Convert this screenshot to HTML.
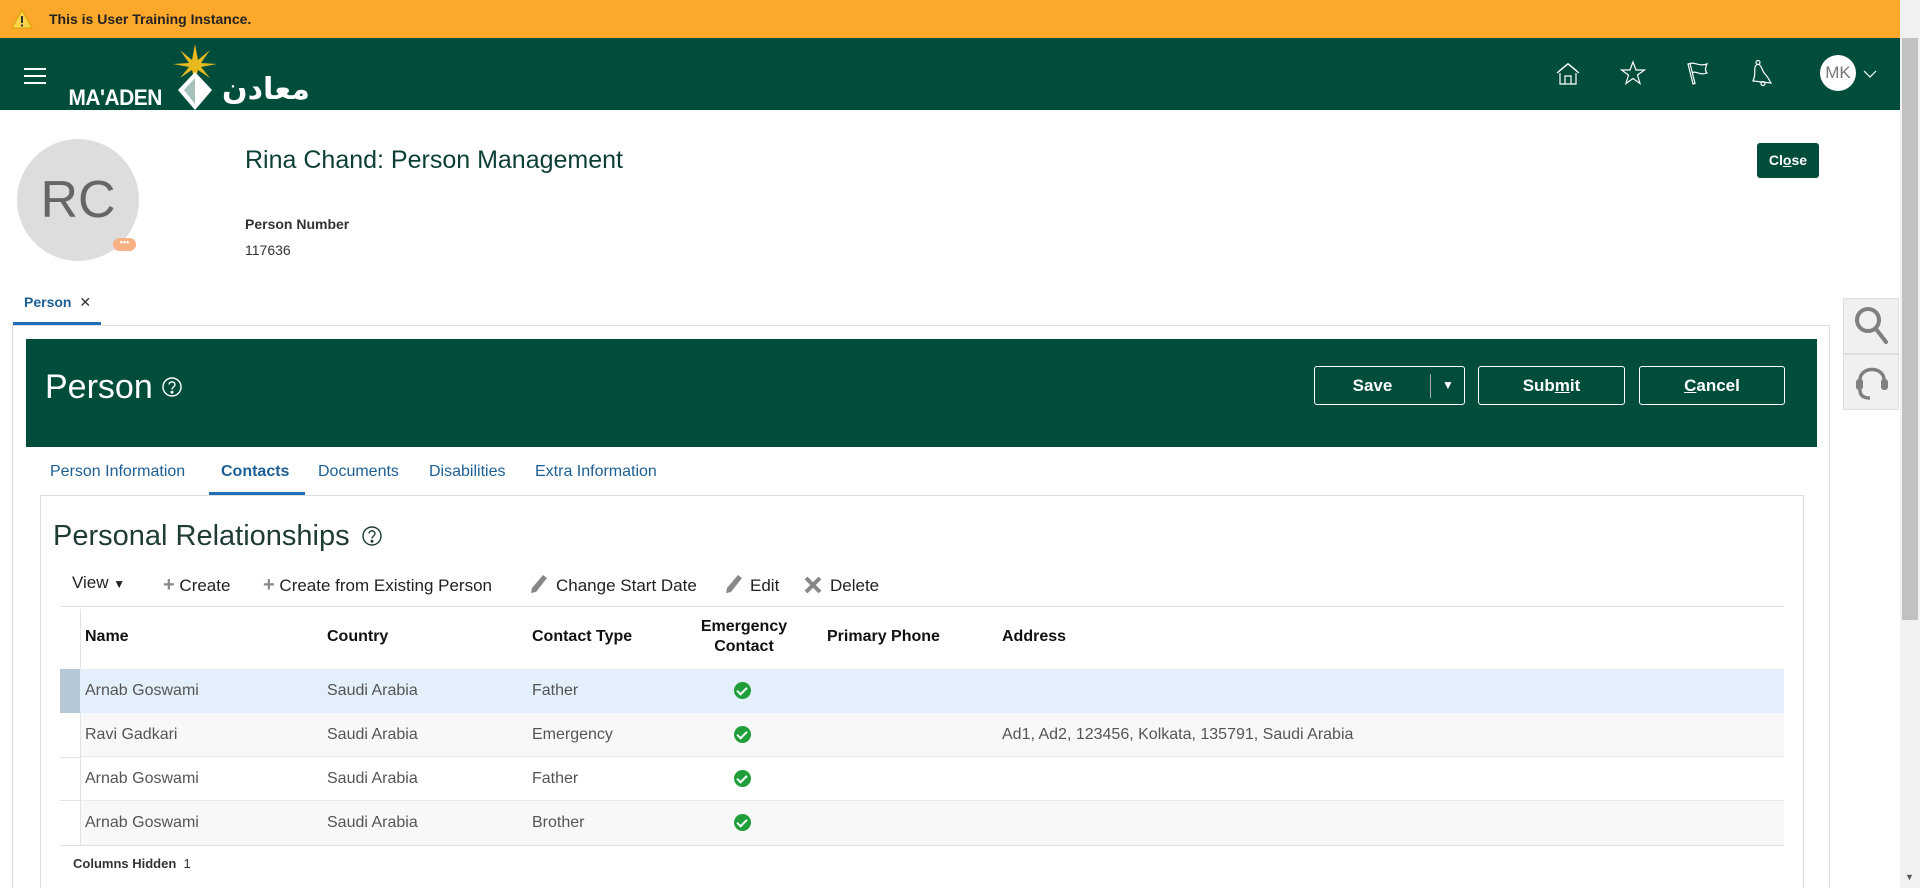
<!DOCTYPE html>
<html style="overflow:hidden;height:888px"><head><meta charset="utf-8"><style>
*{box-sizing:border-box;margin:0;padding:0}
body{width:1920px;height:888px;overflow:hidden;background:#fff;font-family:"Liberation Sans",sans-serif;position:relative;color:#333}
.a{position:absolute;white-space:nowrap}
.btn{position:absolute;border:1px solid #fff;border-radius:3px;color:#fff;font-weight:bold;font-size:17px;text-align:center;line-height:37px;height:39px}
.tb{font-size:17px;color:#222}
.th{font-size:16px;font-weight:bold;color:#111}
.td{font-size:16px;color:#555}
.chk{position:absolute;width:17px;height:17px;border-radius:50%;background:#1f9e3a}
.chk:after{content:"";position:absolute;left:5px;top:3px;width:4px;height:8px;border:solid #fff;border-width:0 2px 2px 0;transform:rotate(45deg)}
</style></head><body>
<div class="a" style="left:0;top:0;width:1900px;height:38px;background:#fca82b"></div>
<svg class="a" style="left:11px;top:9px" width="22" height="20" viewBox="0 0 22 20"><path d="M11 1 L21 19 L1 19 Z" fill="#f7d44a" stroke="#d9a400" stroke-width="1"/><rect x="10" y="7" width="2" height="7" fill="#333"/><rect x="10" y="15.5" width="2" height="2" fill="#333"/></svg>
<div class="a" style="left:49px;top:11px;font-size:14px;font-weight:bold;color:#222">This is User Training Instance.</div>
<div class="a" style="left:0;top:38px;width:1900px;height:72px;background:#004d3c"></div>
<div class="a" style="left:24px;top:68px;width:22px;height:2px;background:#fff"></div>
<div class="a" style="left:24px;top:75px;width:22px;height:2px;background:#fff"></div>
<div class="a" style="left:24px;top:82px;width:22px;height:2px;background:#fff"></div>
<div class="a" style="left:66px;top:85px;font-size:22px;font-weight:bold;color:#fff;letter-spacing:-0.5px;transform:scaleX(0.95)">MA'ADEN</div>
<svg class="a" style="left:170px;top:42px" width="50" height="70" viewBox="0 0 50 70"><polygon points="25,2 28,18 40,8 31,21 47,22 31,25 40,36 28,28 25,40 22,28 10,36 19,25 3,22 19,21 10,8 22,18" fill="#e8b91e"/><polygon points="25,30 42,48 25,68 8,48" fill="#fff"/><polygon points="25,36 25,62 14,48" fill="#004d3c" opacity=".35"/></svg>
<div class="a" style="left:222px;top:72px;font-size:30px;font-weight:bold;color:#fff;font-family:'DejaVu Sans',sans-serif">معادن</div>
<svg class="a" style="left:1555px;top:61px" width="26" height="26" viewBox="0 0 26 26" fill="none" stroke="#fff" stroke-width="1.2"><path d="M2 12 L13 3 L24 12"/><path d="M4 10 L13 2.5 L22 10" opacity=".7"/><path d="M5 12 V23 H21 V12"/><path d="M10 23 V15 H16 V23"/></svg>
<svg class="a" style="left:1620px;top:60px" width="26" height="26" viewBox="0 0 26 26" fill="none" stroke="#fff" stroke-width="1.2"><path d="M13 2 L16 10 L24.5 10 L17.5 15 L20 23.5 L13 18.5 L6 23.5 L8.5 15 L1.5 10 L10 10 Z"/></svg>
<svg class="a" style="left:1685px;top:60px" width="26" height="26" viewBox="0 0 26 26" fill="none" stroke="#fff" stroke-width="1.2"><path d="M3 4 L8 24 L10 23.5 L5 3.5 Z"/><path d="M4.5 4 C9 1 13 7 22 4 C20 8 20 11 22 13 C14 16 11 10 6.8 13"/></svg>
<svg class="a" style="left:1750px;top:59px" width="26" height="28" viewBox="0 0 26 28" fill="none" stroke="#fff" stroke-width="1.2"><circle cx="8" cy="3.5" r="2"/><path d="M7 5.5 C3 8 6 13 4 19 L3 22 L21 24 C19 21 18 18 15 15 C12 12 12 7 9 5.5"/><circle cx="13" cy="24.5" r="2"/></svg>
<div class="a" style="left:1820px;top:55px;width:36px;height:36px;border-radius:50%;background:#fff;color:#777;font-size:17px;line-height:36px;text-align:center">MK</div>
<svg class="a" style="left:1863px;top:70px" width="14" height="9" viewBox="0 0 14 9" fill="none" stroke="#fff" stroke-width="1.2"><path d="M1 1 L7 7 L13 1"/></svg>
<div class="a" style="left:1900px;top:0;width:20px;height:888px;background:#f1f1f1"></div>
<div class="a" style="left:1902px;top:38px;width:16px;height:582px;background:#c1c1c1"></div>
<div class="a" style="left:1905px;top:872px;font-size:9px;color:#555">▼</div>
<div class="a" style="left:17px;top:139px;width:122px;height:122px;border-radius:50%;background:#ddd;color:#666;font-size:52px;line-height:122px;text-align:center">RC</div>
<div class="a" style="left:113px;top:238px;width:23px;height:13px;border-radius:7px;background:#f7b184;color:#fff;font-size:9px;line-height:9px;text-align:center;font-weight:bold">•••</div>
<div class="a" style="left:245px;top:146px;font-size:25px;color:#0b3f35">Rina Chand: Person Management</div>
<div class="a" style="left:245px;top:216px;font-size:14px;font-weight:bold;color:#333">Person Number</div>
<div class="a" style="left:245px;top:242px;font-size:14px;color:#333">117636</div>
<div class="a" style="left:1757px;top:143px;width:62px;height:35px;background:#004d3c;border-radius:3px;color:#fff;font-weight:bold;font-size:14px;line-height:35px;text-align:center">Cl<u>o</u>se</div>
<div class="a" style="left:24px;top:294px;font-size:14px;font-weight:bold;color:#1d5f95">Person <span style="color:#333;font-weight:normal;margin-left:4px">✕</span></div>
<div class="a" style="left:12px;top:325px;width:1818px;height:563px;border:1px solid #ddd;border-bottom:none"></div>
<div class="a" style="left:13px;top:322px;width:88px;height:3px;background:#1e6fb8"></div>
<div class="a" style="left:26px;top:339px;width:1791px;height:108px;background:#004d3c"></div>
<div class="a" style="left:45px;top:368px;font-size:34px;color:#fff;font-weight:300">Person</div>
<svg class="a" style="left:161px;top:376px" width="22" height="22" viewBox="0 0 22 22" fill="none" stroke="#fff" stroke-width="1.4"><circle cx="11" cy="11" r="9"/><path d="M8 8.5 C8 5 14 5 14 8.5 C14 11 11 11 11 13.5"/><circle cx="11" cy="16.3" r=".8" fill="#fff"/></svg>
<div class="btn" style="left:1314px;top:366px;width:151px"><span style="position:absolute;left:0;width:115px;text-align:center">Save</span><span style="position:absolute;left:115px;top:7px;width:1px;height:24px;background:#aaa"></span><span style="position:absolute;left:116px;width:34px;text-align:center;font-size:12px">▼</span></div>
<div class="btn" style="left:1478px;top:366px;width:147px">Sub<u>m</u>it</div>
<div class="btn" style="left:1639px;top:366px;width:146px"><u>C</u>ancel</div>
<div class="a" style="left:50px;top:463px;font-size:16px;color:#1d5f95">Person Information</div>
<div class="a" style="left:221px;top:463px;font-size:16px;color:#1d5f95;font-weight:bold">Contacts</div>
<div class="a" style="left:318px;top:463px;font-size:16px;color:#1d5f95">Documents</div>
<div class="a" style="left:429px;top:463px;font-size:16px;color:#1d5f95">Disabilities</div>
<div class="a" style="left:535px;top:463px;font-size:16px;color:#1d5f95">Extra Information</div>
<div class="a" style="left:40px;top:495px;width:1764px;height:393px;border:1px solid #ddd;border-bottom:none"></div>
<div class="a" style="left:209px;top:492px;width:96px;height:3px;background:#1e6fb8"></div>
<div class="a" style="left:53px;top:520px;font-size:29px;color:#1e3b35;font-weight:300">Personal Relationships</div>
<svg class="a" style="left:361px;top:525px" width="22" height="22" viewBox="0 0 22 22" fill="none" stroke="#1e3b35" stroke-width="1.4"><circle cx="11" cy="11" r="9"/><path d="M8 8.5 C8 5 14 5 14 8.5 C14 11 11 11 11 13.5"/><circle cx="11" cy="16.3" r=".8" fill="#1e3b35"/></svg>
<div class="a tb" style="left:72px;top:573px">View <span style="font-size:12px">▼</span></div>
<div class="a tb" style="left:163px;top:576px"><span style="color:#888;font-weight:bold;font-size:20px;line-height:16px">+</span> Create</div>
<div class="a tb" style="left:263px;top:576px"><span style="color:#888;font-weight:bold;font-size:20px;line-height:16px">+</span> Create from Existing Person</div>
<svg class="a" style="left:530px;top:574px" width="18" height="20" viewBox="0 0 18 20"><path d="M13 1 L17 4 L6 18 L1 19 L2 14 Z" fill="#888"/></svg>
<div class="a tb" style="left:556px;top:576px">Change Start Date</div>
<svg class="a" style="left:725px;top:574px" width="18" height="20" viewBox="0 0 18 20"><path d="M13 1 L17 4 L6 18 L1 19 L2 14 Z" fill="#888"/></svg>
<div class="a tb" style="left:750px;top:576px">Edit</div>
<svg class="a" style="left:804px;top:576px" width="18" height="18" viewBox="0 0 18 18" stroke="#888" stroke-width="4"><path d="M2 2 L16 16 M16 2 L2 16"/></svg>
<div class="a tb" style="left:830px;top:576px">Delete</div>
<div class="a" style="left:60px;top:606px;width:1724px;height:1px;background:#dde3e8"></div>
<div class="a" style="left:80px;top:609px;width:1px;height:236px;background:#dde3e8"></div>
<div class="a th" style="left:85px;top:628px">Name</div>
<div class="a th" style="left:327px;top:628px">Country</div>
<div class="a th" style="left:532px;top:628px">Contact Type</div>
<div class="a th" style="left:696px;top:617px;width:96px;text-align:center;line-height:20px">Emergency<br>Contact</div>
<div class="a th" style="left:827px;top:628px">Primary Phone</div>
<div class="a th" style="left:1002px;top:628px">Address</div>
<div class="a" style="left:60px;top:669px;width:1724px;height:44px;background:#e3f0fb"></div>
<div class="a" style="left:60px;top:669px;width:20px;height:44px;background:#b6c7d5"></div>
<div class="a" style="left:81px;top:713px;width:1703px;height:44px;background:#f8f8f8;border-bottom:1px solid #eaeaea"></div>
<div class="a" style="left:60px;top:757px;width:20px;height:1px;background:#e3e3e3"></div>
<div class="a" style="left:81px;top:800px;width:1703px;height:45px;background:#f8f8f8;border-top:1px solid #eaeaea"></div>
<div class="a" style="left:60px;top:800px;width:20px;height:1px;background:#e3e3e3"></div>
<div class="a" style="left:60px;top:845px;width:1724px;height:1px;background:#dde3e8"></div>
<div class="a td" style="left:85px;top:682px">Arnab Goswami</div><div class="a td" style="left:327px;top:682px">Saudi Arabia</div><div class="a td" style="left:532px;top:682px">Father</div><div class="chk" style="left:734px;top:682px"></div>
<div class="a td" style="left:85px;top:726px">Ravi Gadkari</div><div class="a td" style="left:327px;top:726px">Saudi Arabia</div><div class="a td" style="left:532px;top:726px">Emergency</div><div class="chk" style="left:734px;top:726px"></div><div class="a td" style="left:1002px;top:726px">Ad1, Ad2, 123456, Kolkata, 135791, Saudi Arabia</div>
<div class="a td" style="left:85px;top:770px">Arnab Goswami</div><div class="a td" style="left:327px;top:770px">Saudi Arabia</div><div class="a td" style="left:532px;top:770px">Father</div><div class="chk" style="left:734px;top:770px"></div>
<div class="a td" style="left:85px;top:814px">Arnab Goswami</div><div class="a td" style="left:327px;top:814px">Saudi Arabia</div><div class="a td" style="left:532px;top:814px">Brother</div><div class="chk" style="left:734px;top:814px"></div>
<div class="a" style="left:73px;top:856px;font-size:13px;font-weight:bold;color:#333">Columns Hidden&nbsp; <span style="font-weight:normal">1</span></div>
<div class="a" style="left:1843px;top:298px;width:56px;height:112px;background:#f0f0f0;border:1px solid #ddd"></div>
<div class="a" style="left:1844px;top:353px;width:54px;height:2px;background:#ddd"></div>
<svg class="a" style="left:1852px;top:304px" width="40" height="44" viewBox="0 0 40 44" fill="none" stroke="#808080" stroke-width="4"><circle cx="16" cy="16" r="11"/><path d="M24 25 L34 38" stroke-linecap="round"/></svg>
<svg class="a" style="left:1852px;top:360px" width="40" height="44" viewBox="0 0 40 44" fill="none" stroke="#808080" stroke-width="3.5"><path d="M8 20 C8 6 32 6 32 20"/><rect x="4" y="19" width="7" height="11" rx="3" fill="#808080" stroke="none"/><rect x="29" y="19" width="7" height="11" rx="3" fill="#808080" stroke="none"/><path d="M8 30 C8 36 12 38 18 38"/></svg>
</body></html>
